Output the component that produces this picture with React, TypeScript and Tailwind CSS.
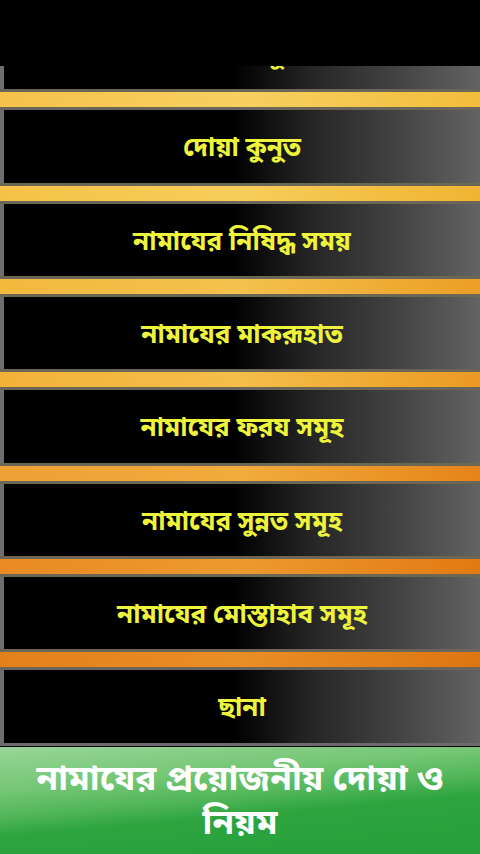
import React from 'react';

const items = [
  'দোয়া মাসুরা',
  'দোয়া কুনুত',
  'নামাযের নিষিদ্ধ সময়',
  'নামাযের মাকরূহাত',
  'নামাযের ফরয সমূহ',
  'নামাযের সুন্নত সমূহ',
  'নামাযের মোস্তাহাব সমূহ',
  'ছানা',
];

// separator colours drift from gold to orange down the list
const seps = [
  'bg-[linear-gradient(90deg,#f6c24a,#f7d060_50%,#f2bd3c)]',
  'bg-[linear-gradient(90deg,#f5c246,#f6ce5a_50%,#f0b432)]',
  'bg-[linear-gradient(90deg,#f2b93e,#f3c24c_50%,#ec9e26)]',
  'bg-[linear-gradient(90deg,#f2b23a,#f4be48_50%,#eb9a24)]',
  'bg-[linear-gradient(90deg,#eea034,#f1ac3c_50%,#e68418)]',
  'bg-[linear-gradient(90deg,#e98a22,#ec9a2e_50%,#e27a12)]',
  'bg-[linear-gradient(90deg,#e4801a,#e98e24_50%,#de7610)]',
];

const font = { fontFamily: '"Noto Sans Bengali", "Noto Sans", "Lohit Bengali", sans-serif' };

const Row = ({ label }: { label: string }) => (
  <div className="h-[72.33px] border-l-4 border-[#6e6e6e] bg-[linear-gradient(90deg,#000_0%,#000_48%,#262626_65%,#474747_85%,#636363_100%)] flex items-center justify-center">
    <span className="text-[26px] font-bold text-[#eef33c] leading-none pt-2">{label}</span>
  </div>
);

const Sep = ({ cls }: { cls: string }) => (
  <div className="border-y-[3px] border-[#6b6657]">
    <div className={`h-[15px] ${cls}`} />
  </div>
);

export default function App() {
  return (
    <div className="w-[480px] h-[854px] bg-black flex flex-col overflow-hidden" style={font}>
      <div className="h-[66px] shrink-0 bg-black relative z-10" />
      <div className="flex-1 overflow-hidden">
        <div className="-mt-[49px] flex flex-col">
          {items.map((label, i) => (
            <React.Fragment key={label}>
              <Row label={label} />
              {i < seps.length && <Sep cls={seps[i]} />}
            </React.Fragment>
          ))}
          <div className="h-[3px] bg-[#6b6b6b]" />
        </div>
      </div>
      <div className="h-[107px] shrink-0 bg-[linear-gradient(175deg,#98d598_0%,#74c674_30%,#4fb558_48%,#2ea43f_60%,#25a03a_100%)] flex flex-col items-center justify-center text-white font-bold text-[35px] leading-[44px] text-center pt-1">
        <span>নামাযের প্রয়োজনীয় দোয়া ও</span>
        <span>নিয়ম</span>
      </div>
    </div>
  );
}
